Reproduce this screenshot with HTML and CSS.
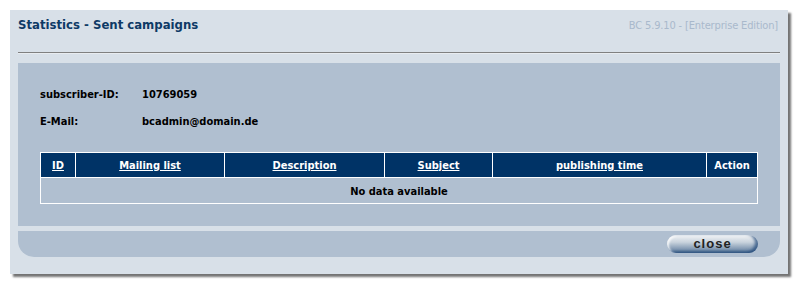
FILE: index.html
```html
<!DOCTYPE html>
<html lang="en">
<head>
    <meta charset="UTF-8">
    <title>Statistics - Sent campaigns</title>
    <link rel="stylesheet" href="styles.css">
</head>
<body>
    <div class="window">
        <div class="header">
            <h1>Statistics - Sent campaigns</h1>
            <span class="version">BC 5.9.10 - [Enterprise Edition]</span>
        </div>
        <hr class="divider">

        <div class="content">
            <div class="info-row">
                <span class="info-label">subscriber-ID:</span>
                <span class="info-value">10769059</span>
            </div>
            <div class="info-row">
                <span class="info-label">E-Mail:</span>
                <span class="info-value">bcadmin@domain.de</span>
            </div>

            <table class="list">
                <thead>
                    <tr>
                        <th class="col-id"><a href="#">ID</a></th>
                        <th class="col-list"><a href="#">Mailing list</a></th>
                        <th class="col-desc"><a href="#">Description</a></th>
                        <th class="col-subject"><a href="#">Subject</a></th>
                        <th class="col-time"><a href="#">publishing time</a></th>
                        <th class="col-action">Action</th>
                    </tr>
                </thead>
                <tbody>
                    <tr>
                        <td colspan="6">No data available</td>
                    </tr>
                </tbody>
            </table>
        </div>

        <div class="footer">
            <button type="button" class="close-btn">close</button>
        </div>
    </div>
</body>
</html>
```

FILE: styles.css
```css
body {
    margin: 0;
    padding: 10px;
    background-color: #fff;
    font-family: "DejaVu Sans Condensed", "DejaVu Sans", Tahoma, sans-serif;
    font-size: 11px;
    color: #000;
}
.window {
    width: 778px;
    height: 264px;
    box-sizing: border-box;
    padding: 0 8px;
    background-color: #d8e0e8;
    box-shadow: 3px 3px 2px rgba(0,0,0,0.55);
}
.header {
    display: flex;
    justify-content: space-between;
    align-items: baseline;
    padding-top: 7px;
    height: 36px;
    box-sizing: border-box;
}
h1 {
    margin: 0;
    font-size: 13px;
    font-weight: bold;
    color: #0e3a66;
}
.version {
    color: #a9b9cc;
    font-size: 11px;
    letter-spacing: -0.15px;
    margin-right: 2px;
}
.divider {
    margin: 6px 0 9px 0;
    border: none;
    border-top: 1px solid #808080;
    border-bottom: 1px solid #e8ecf0;
}
.content {
    background-color: #b0bfd0;
    height: 163px;
    padding: 18px 22px 0 22px;
    box-sizing: border-box;
}
.info-row {
    display: flex;
    font-weight: bold;
    height: 27px;
    align-items: center;
}
.info-label {
    width: 102px;
}
.list {
    margin-top: 17px;
    width: 718px;
    border-collapse: collapse;
    border: 1px solid #fff;
    font-weight: bold;
}
.list th {
    background-color: #003366;
    color: #fff;
    height: 24px;
    padding: 0;
    border: 1px solid #fff;
    font-size: 11px;
}
.list th a {
    color: #fff;
}
.list td {
    height: 24px;
    text-align: center;
    padding: 1px 0 0 0;
}
.col-id { width: 34px; }
.col-list { width: 148px; }
.col-desc { width: 159px; }
.col-subject { width: 107px; }
.col-time { width: 213px; }
.footer {
    margin-top: 5px;
    height: 26px;
    background-color: #b0bfd0;
    border-radius: 0 0 16px 16px;
    display: flex;
    justify-content: flex-end;
    align-items: flex-start;
    padding: 4px 22px 0 0;
    box-sizing: border-box;
}
.close-btn {
    width: 91px;
    height: 18px;
    border: none;
    border-radius: 9px;
    background: linear-gradient(to bottom, #f2f4f6 0%, #c9d3dd 40%, #7d95b0 80%, #3e6189 100%);
    box-shadow: inset -3px -1px 3px rgba(30,70,120,0.7), inset 2px 1px 2px rgba(255,255,255,0.8);
    font-family: "Liberation Sans", Arial, sans-serif;
    font-weight: bold;
    font-size: 13px;
    letter-spacing: 1px;
    color: #222;
    padding: 0;
    line-height: 16px;
}
```
